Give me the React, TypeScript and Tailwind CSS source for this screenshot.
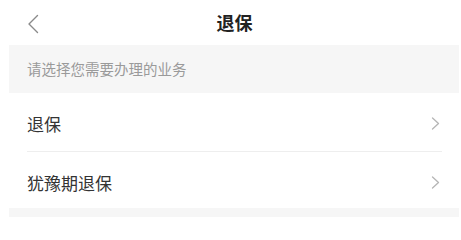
import React from "react";

const font = { fontFamily: '"Noto Sans CJK SC", "Noto Sans", sans-serif' };

function Chevron() {
  return (
    <svg width="9" height="13" viewBox="0 0 9 13" fill="none" className="shrink-0">
      <path d="M1.5 1 L7.5 6.5 L1.5 12" stroke="#b5b5b5" strokeWidth="1.3" strokeLinecap="round" strokeLinejoin="round" />
    </svg>
  );
}

export default function App() {
  return (
    <div className="w-[461px] h-[217px] bg-white overflow-hidden" style={font}>
      <div className="relative h-[45px] flex items-center justify-center">
        <div className="absolute left-[27px] top-[14px]">
          <svg width="12" height="20" viewBox="0 0 12 20" fill="none">
            <path d="M10.5 1.5 L2 10 L10.5 18.5" stroke="#8a8a8a" strokeWidth="1.4" strokeLinecap="round" strokeLinejoin="round" />
          </svg>
        </div>
        <span className="text-[18px] font-bold text-[#222] leading-none ml-[8px] -mt-[2px]">退保</span>
      </div>
      <div className="ml-[9px] mr-[2px] h-[48px] bg-[#f6f6f6] flex items-center pl-[18px]">
        <span className="text-[14.5px] text-[#9a9a9a] leading-none">请选择您需要办理的业务</span>
      </div>
      <div className="h-[58px] flex items-center justify-between pl-[27px] pr-[21px]">
        <span className="text-[17px] text-[#333] leading-none mt-[3px]">退保</span>
        <div className="mt-[3px]"><Chevron /></div>
      </div>
      <div className="ml-[27px] mr-[19px] h-px bg-[#eeeeee]" />
      <div className="h-[56px] flex items-center justify-between pl-[27px] pr-[21px]">
        <span className="text-[17px] text-[#333] leading-none mt-[4px]">犹豫期退保</span>
        <div className="mt-[4px]"><Chevron /></div>
      </div>
      <div className="ml-[9px] mr-[2px] h-[10px] bg-[#f6f6f6]" />
    </div>
  );
}
